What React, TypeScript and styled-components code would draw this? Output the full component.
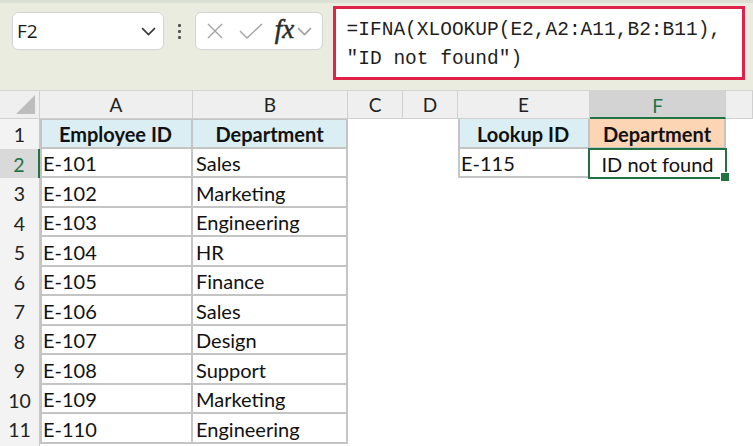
import React from "react";
import styled, { createGlobalStyle, css } from "styled-components";

const Global = createGlobalStyle`
  html, body { margin: 0; padding: 0; background: #ffffff; }
  body { width: 753px; height: 446px; overflow: hidden; font-family: "Open Sans", "Noto Sans", sans-serif; }
  * { box-sizing: border-box; }
`;

const Page = styled.div`
  display: flex;
  flex-direction: column;
  width: 753px;
  height: 446px;
  background: #ffffff;
  overflow: hidden;
`;

const FormulaArea = styled.div`
  height: 91px;
  background: #e9ecdf;
  border-top: 3px solid #dcdfd3;
  border-bottom: 1px solid #d4d6cc;
  display: flex;
  align-items: flex-start;
  padding: 3px 8px 0 12px;
  flex-shrink: 0;
`;

const NameBox = styled.div`
  margin-top: 6px;
  width: 152px;
  height: 38px;
  background: #ffffff;
  border: 1px solid #d3d3d3;
  border-radius: 6px;
  display: flex;
  align-items: center;
  justify-content: space-between;
  padding: 0 7px 0 4px;
  font-family: "Open Sans", "Noto Sans", sans-serif;
  font-size: 19px;
  color: #1a1a1a;
`;

const Dots = styled.div`
  margin: 18px 0 0 0;
  width: 31px;
  display: flex;
  flex-direction: column;
  align-items: center;
  gap: 3px;
  & > span {
    width: 3px;
    height: 3px;
    border-radius: 1px;
    background: #555;
  }
`;

const IconBox = styled.div`
  margin-top: 6px;
  width: 128px;
  height: 38px;
  background: #ffffff;
  border: 1px solid #d3d3d3;
  border-radius: 6px;
  display: flex;
  align-items: center;
  padding: 0 0 0 10px;
`;

const Fx = styled.span`
  font-family: "Liberation Serif", "DejaVu Serif", serif;
  font-style: italic;
  font-size: 27px;
  color: #2b2b2b;
  margin: -4px 3px 0 11px;
  -webkit-text-stroke: 0.5px #2b2b2b;
`;

const FormulaBox = styled.div`
  margin-left: 10px;
  width: 413px;
  height: 74px;
  background: #ffffff;
  border: 3px solid #e0224b;
  padding: 7px 0 0 11px;
  font-family: "Liberation Mono", "DejaVu Sans Mono", monospace;
  font-size: 19.5px;
  line-height: 29px;
  color: #1e1e1e;
  white-space: pre;
`;

const Sheet = styled.div`
  display: grid;
  grid-template-columns: 40px 153px 155px 55px 55px 132px 136px 1fr;
  grid-template-rows: 28px repeat(11, 29.5px) 1fr;
  flex: 1;
  background: #ffffff;
`;

const Corner = styled.div`
  background: #efefef;
  border-right: 1px solid #d0d0d0;
  border-bottom: 1px solid #d0d0d0;
  display: flex;
  align-items: flex-end;
  justify-content: flex-end;
  padding: 0 4px 4px 0;
`;

const ColHead = styled.div<{ $sel?: boolean }>`
  background: ${(p) => (p.$sel ? "#d3d3d3" : "#efefef")};
  color: ${(p) => (p.$sel ? "#217346" : "#222")};
  border-right: 1px solid #d0d0d0;
  border-bottom: ${(p) => (p.$sel ? "2px solid #217346" : "1px solid #d0d0d0")};
  display: flex;
  align-items: center;
  justify-content: center;
  font-family: "Lato", "Open Sans", sans-serif;
  font-size: 19px;
  padding-top: ${(p) => (p.$sel ? "2px" : "0")};
`;

const RowHead = styled.div<{ $sel?: boolean }>`
  background: ${(p) => (p.$sel ? "#d9d9d9" : "#f3f3f3")};
  color: ${(p) => (p.$sel ? "#217346" : "#222")};
  border-right: ${(p) => (p.$sel ? "2px solid #217346" : "1px solid #c8c8c8")};
  display: flex;
  align-items: center;
  justify-content: center;
  padding-top: 2px;
  font-family: "Lato", "Open Sans", sans-serif;
  font-size: 19.5px;
`;

const Cell = styled.div<{
  $bg?: string;
  $bold?: boolean;
  $center?: boolean;
  $border?: boolean;
  $top?: boolean;
  $left?: boolean;
  $sel?: boolean;
}>`
  position: relative;
  min-width: 0;
  background: ${(p) => p.$bg || "#ffffff"};
  display: flex;
  align-items: center;
  justify-content: ${(p) => (p.$center ? "center" : "flex-start")};
  padding: 2px 3px 0 ${(p) => (p.$left ? "1px" : "3px")};
  font-family: "Lato", "Open Sans", sans-serif;
  font-size: 20px;
  font-weight: ${(p) => (p.$bold ? 700 : 400)};
  color: #111;
  white-space: nowrap;
  ${(p) =>
    p.$border &&
    css`
      border-right: 2px solid #c4c4c4;
      border-bottom: 2px solid #c4c4c4;
    `}
  ${(p) =>
    p.$top &&
    css`
      border-top: 1px solid #c4c4c4;
    `}
  ${(p) =>
    p.$left &&
    css`
      border-left: 2px solid #c4c4c4;
    `}
  ${(p) =>
    p.$sel &&
    css`
      z-index: 2;
      border: 2px solid #217346;
      margin: -1px -1px -1px -2px;
      &::after {
        content: "";
        position: absolute;
        right: -5px;
        bottom: -5px;
        width: 8px;
        height: 8px;
        background: #217346;
        border: 1px solid #ffffff;
      }
    `}
`;

const cols = ["A", "B", "C", "D", "E", "F", ""];

const data: [string, string][] = [
  ["E-101", "Sales"],
  ["E-102", "Marketing"],
  ["E-103", "Engineering"],
  ["E-104", "HR"],
  ["E-105", "Finance"],
  ["E-106", "Sales"],
  ["E-107", "Design"],
  ["E-108", "Support"],
  ["E-109", "Marketing"],
  ["E-110", "Engineering"],
];

const Chevron = ({ color, size }: { color: string; size: number }) => (
  <svg width={size} height={size * 0.6} viewBox="0 0 14 8.4">
    <polyline points="1,1 7,7 13,1" fill="none" stroke={color} strokeWidth="1.6" />
  </svg>
);

export default function App() {
  return (
    <Page>
      <Global />
      <FormulaArea>
        <NameBox>
          <span>F2</span>
          <Chevron color="#3a3a3a" size={15} />
        </NameBox>
        <Dots>
          <span />
          <span />
          <span />
        </Dots>
        <IconBox>
          <svg width="18" height="18" viewBox="0 0 18 18">
            <path d="M2 2 L16 16 M16 2 L2 16" stroke="#a3a3a3" strokeWidth="1.4" fill="none" />
          </svg>
          <svg width="26" height="18" viewBox="0 0 26 18" style={{ marginLeft: 14 }}>
            <polyline points="2,9 9,16 24,2" stroke="#a3a3a3" strokeWidth="1.4" fill="none" />
          </svg>
          <Fx>fx</Fx>
          <Chevron color="#a3a3a3" size={15} />
        </IconBox>
        <FormulaBox>
          {'=IFNA(XLOOKUP(E2,A2:A11,B2:B11),\n"ID not found")'}
        </FormulaBox>
      </FormulaArea>
      <Sheet>
        <Corner>
          <svg width="19" height="19" viewBox="0 0 19 19">
            <polygon points="19,0 19,19 0,19" fill="#bdbdbd" />
          </svg>
        </Corner>
        {cols.map((c, i) => (
          <ColHead key={i} $sel={c === "F"}>
            {c}
          </ColHead>
        ))}

        <RowHead>1</RowHead>
        <Cell $bg="#daeef3" $bold $center $border $left $top>Employee ID</Cell>
        <Cell $bg="#daeef3" $bold $center $border $top>Department</Cell>
        <Cell />
        <Cell />
        <Cell $bg="#daeef3" $bold $center $border $left>Lookup ID</Cell>
        <Cell $bg="#fcd5b4" $bold $center $border>Department</Cell>
        <Cell />

        {data.map(([id, dep], i) => {
          const r = i + 2;
          return (
            <React.Fragment key={r}>
              <RowHead $sel={r === 2}>{r}</RowHead>
              <Cell $border $left>{id}</Cell>
              <Cell $border>{dep}</Cell>
              <Cell />
              <Cell />
              {r === 2 ? (
                <>
                  <Cell $border $left>E-115</Cell>
                  <Cell $center $sel>ID not found</Cell>
                </>
              ) : (
                <>
                  <Cell />
                  <Cell />
                </>
              )}
              <Cell />
            </React.Fragment>
          );
        })}
        <RowHead />
        <Cell />
        <Cell />
        <Cell />
        <Cell />
        <Cell />
        <Cell />
        <Cell />
      </Sheet>
    </Page>
  );
}
